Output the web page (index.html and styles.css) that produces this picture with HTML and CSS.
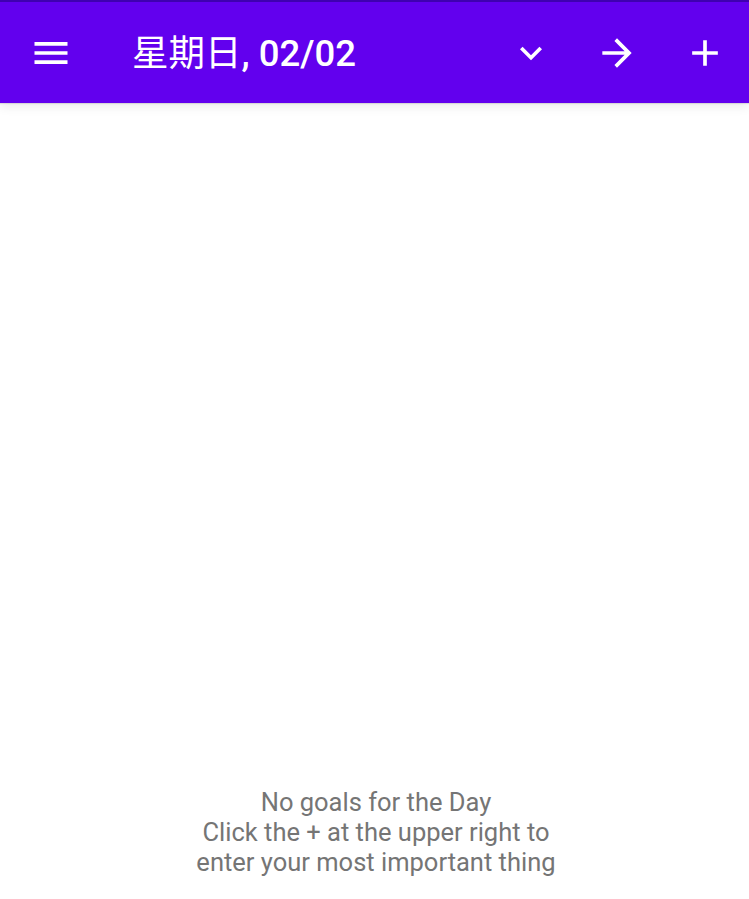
FILE: index.html
```html
<!DOCTYPE html>
<html lang="zh">
<head>
<meta charset="utf-8">
<link rel="stylesheet" href="styles.css">
<title>Goals</title>
</head>
<body>
<div class="app">
  <header class="appbar">
    <button class="icon-btn menu" aria-label="menu">
      <svg viewBox="0 0 24 24" width="44" height="44"><path fill="#fff" d="M3 18h18v-2H3v2zm0-5h18v-2H3v2zm0-7v2h18V6H3z"/></svg>
    </button>
    <h1 class="title"><span class="title-day">星期日</span><span class="title-date">, 02/02</span></h1>
    <div class="spacer"></div>
    <button class="icon-btn chevron" aria-label="expand">
      <svg viewBox="0 0 24 24" width="44" height="44"><path fill="#fff" d="M16.59 8.59L12 13.17 7.41 8.59 6 10l6 6 6-6z"/></svg>
    </button>
    <button class="icon-btn arrow" aria-label="next">
      <svg viewBox="0 0 24 24" width="44" height="44"><path fill="#fff" d="M12 4l-1.41 1.41L16.17 11H4v2h12.17l-5.58 5.59L12 20l8-8z"/></svg>
    </button>
    <button class="icon-btn plus" aria-label="add">
      <svg viewBox="0 0 24 24" width="44" height="44"><path fill="#fff" d="M19 13h-6v6h-2v-6H5v-2h6V5h2v6h6v2z"/></svg>
    </button>
  </header>
  <main class="content">
    <p class="empty">No goals for the Day<br>Click the + at the upper right to<br>enter your most important thing</p>
  </main>
</div>
</body>
</html>
```

FILE: styles.css
```css
html, body {
  margin: 0;
  padding: 0;
  background: #ffffff;
}
body {
  font-family: Roboto, "Noto Sans CJK SC", sans-serif;
}
.app {
  width: 749px;
  height: 899px;
  display: flex;
  flex-direction: column;
  overflow: hidden;
}
.appbar {
  box-sizing: border-box;
  height: 103px;
  flex: none;
  background: #6200ee;
  border-top: 2px solid #3f00b0;
  display: flex;
  align-items: center;
  padding: 0 22px 0 29px;
  box-shadow: 0 1px 1px rgba(0,0,0,0.10), 0 4px 10px rgba(0,0,0,0.08);
  position: relative;
  z-index: 1;
}
.icon-btn {
  width: 44px;
  height: 44px;
  padding: 0;
  border: 0;
  background: none;
  flex: none;
  display: block;
}
.icon-btn svg {
  display: block;
}
.title {
  margin: 0 0 0 59px;
  color: #ffffff;
  font-family: Roboto, "Noto Sans CJK SC", sans-serif;
  font-weight: 400;
  font-size: 36.5px;
  line-height: 44px;
  white-space: nowrap;
  padding-top: 3px;
}
.title-date {
  font-weight: 500;
}
.spacer {
  flex: 1;
}
.chevron {
  margin-right: 42px;
}
.arrow {
  margin-right: 44px;
}
.content {
  flex: 1;
  display: flex;
  flex-direction: column;
  justify-content: flex-end;
  padding-bottom: 22px;
}
.empty {
  margin: 0;
  padding-left: 3px;
  text-align: center;
  color: #757575;
  font-size: 25.5px;
  line-height: 30px;
}
```
